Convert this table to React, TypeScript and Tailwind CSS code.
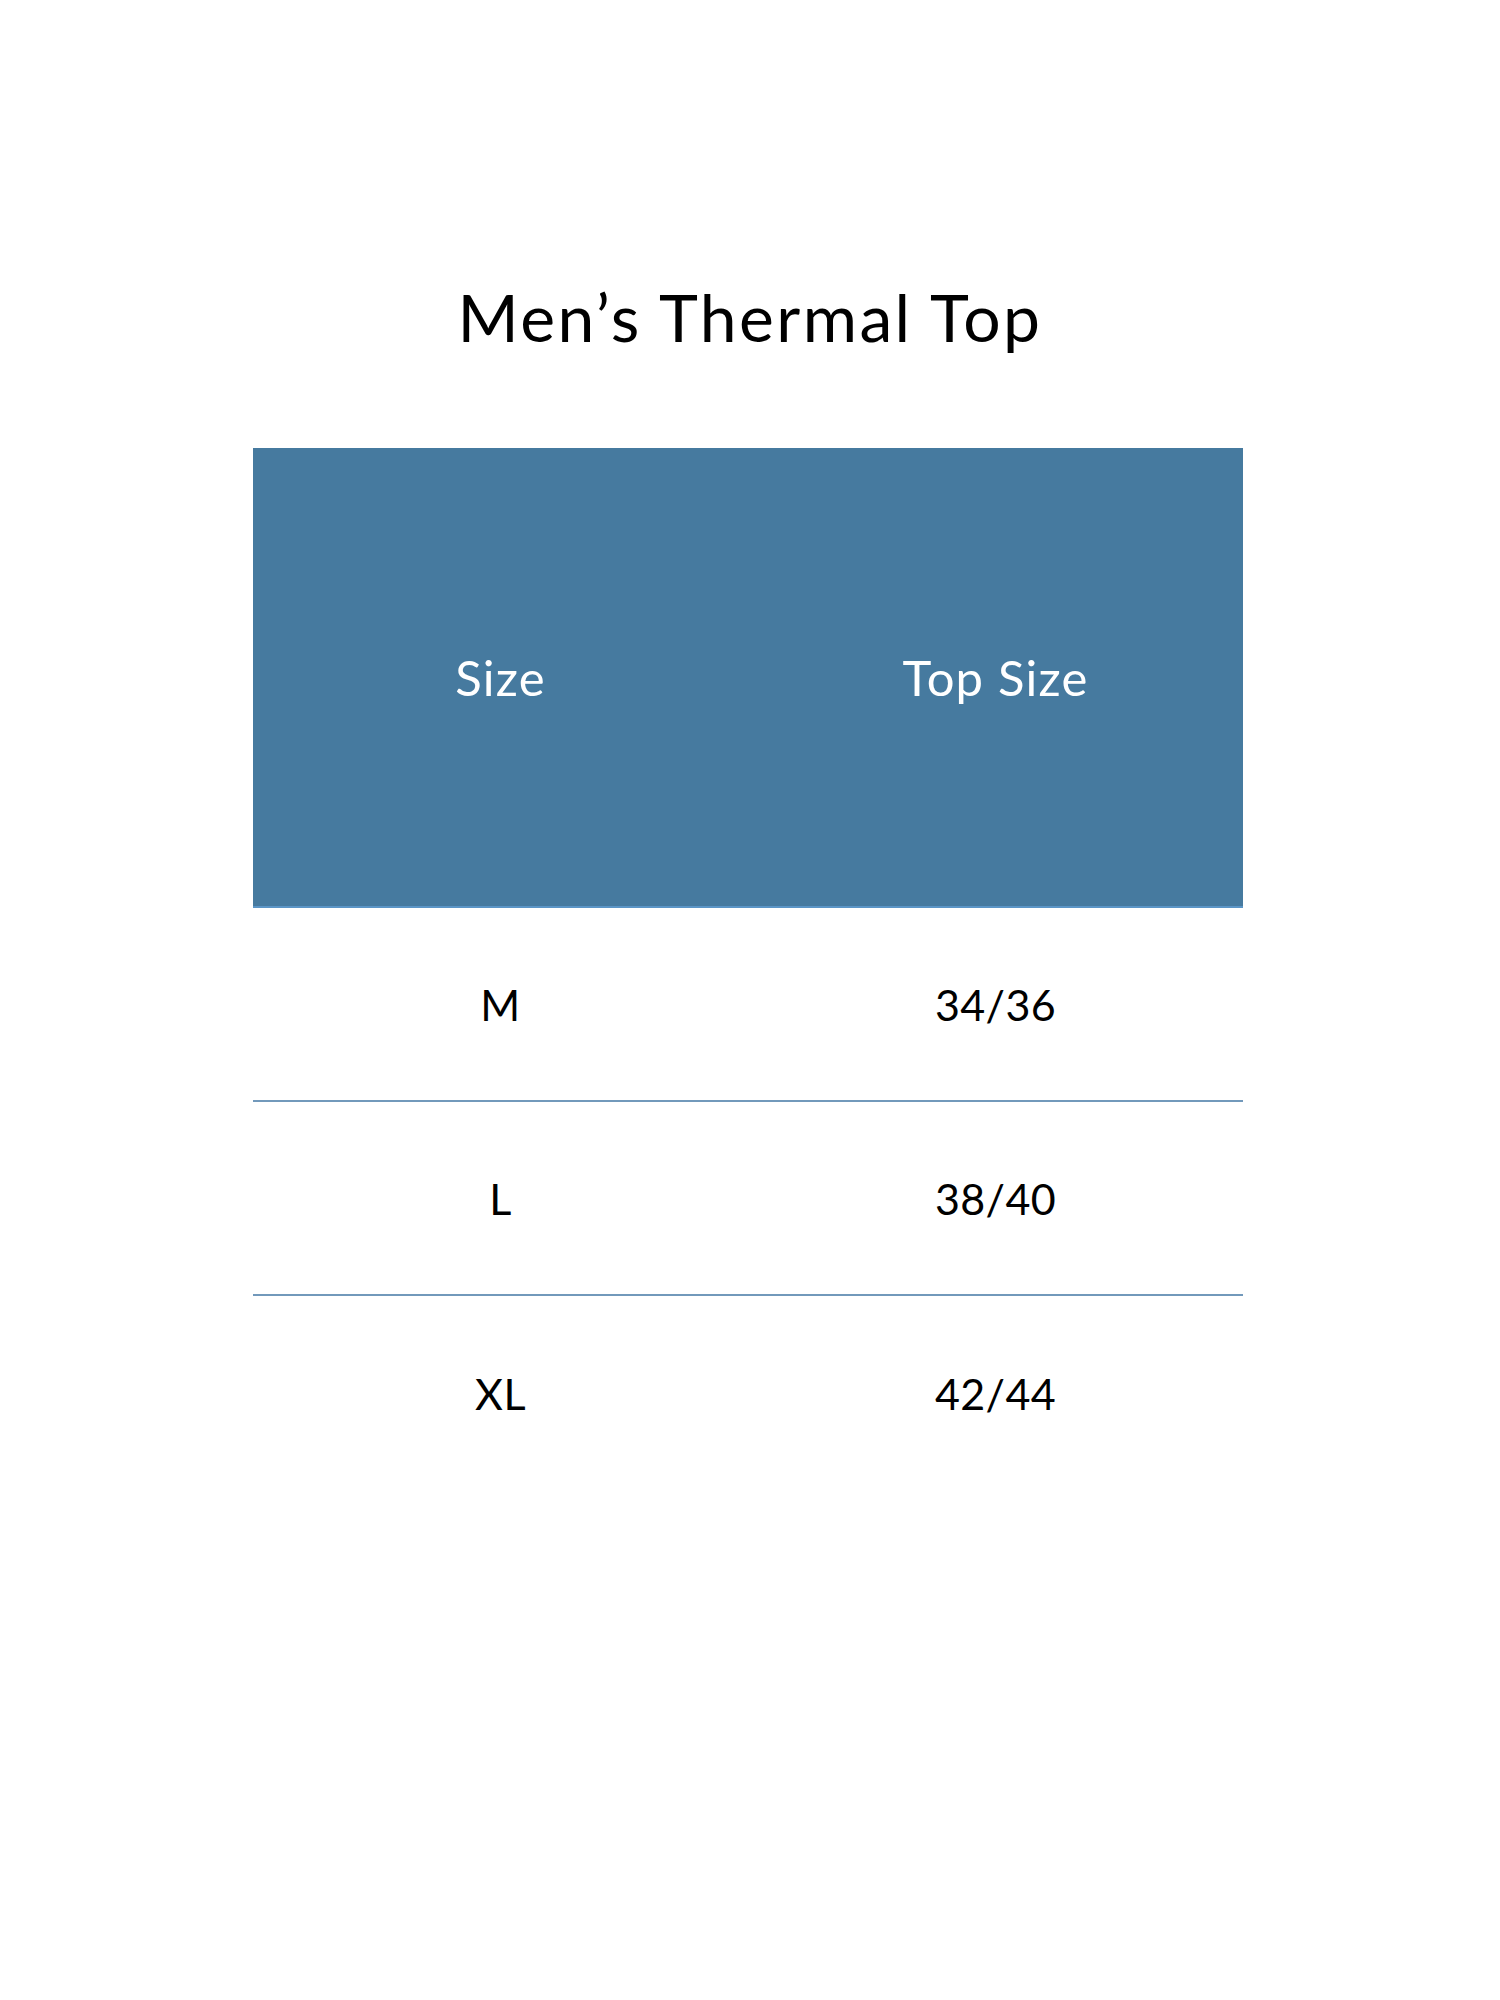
const rows = [
  { size: "M", top: "34/36" },
  { size: "L", top: "38/40" },
  { size: "XL", top: "42/44" },
];

export default function App() {
  return (
    <div className="min-h-[2000px] w-full bg-white pt-[284px] font-['Lato','Open_Sans',sans-serif] text-black">
      <h1 className="text-center text-[66px] font-normal leading-none tracking-[2.4px]">Men’s Thermal Top</h1>

      <div className="ml-[253px] mt-[98px] w-[990px]">
        <div className="grid h-[460px] grid-cols-2 border-b-2 border-[#5b95c6] bg-[#467a9f] text-[49px] leading-none tracking-[1.2px] text-white">
          <div className="flex items-center justify-center">Size</div>
          <div className="flex items-center justify-center">Top Size</div>
        </div>

        {rows.map((row, i) => (
          <div
            key={row.size}
            className={`grid h-[194px] grid-cols-2 text-[43px] leading-none tracking-[0.4px] ${
              i < rows.length - 1 ? "border-b-2 border-[#7299bb]" : ""
            }`}
          >
            <div className="flex items-center justify-center">{row.size}</div>
            <div className="flex items-center justify-center">{row.top}</div>
          </div>
        ))}
      </div>
    </div>
  );
}
